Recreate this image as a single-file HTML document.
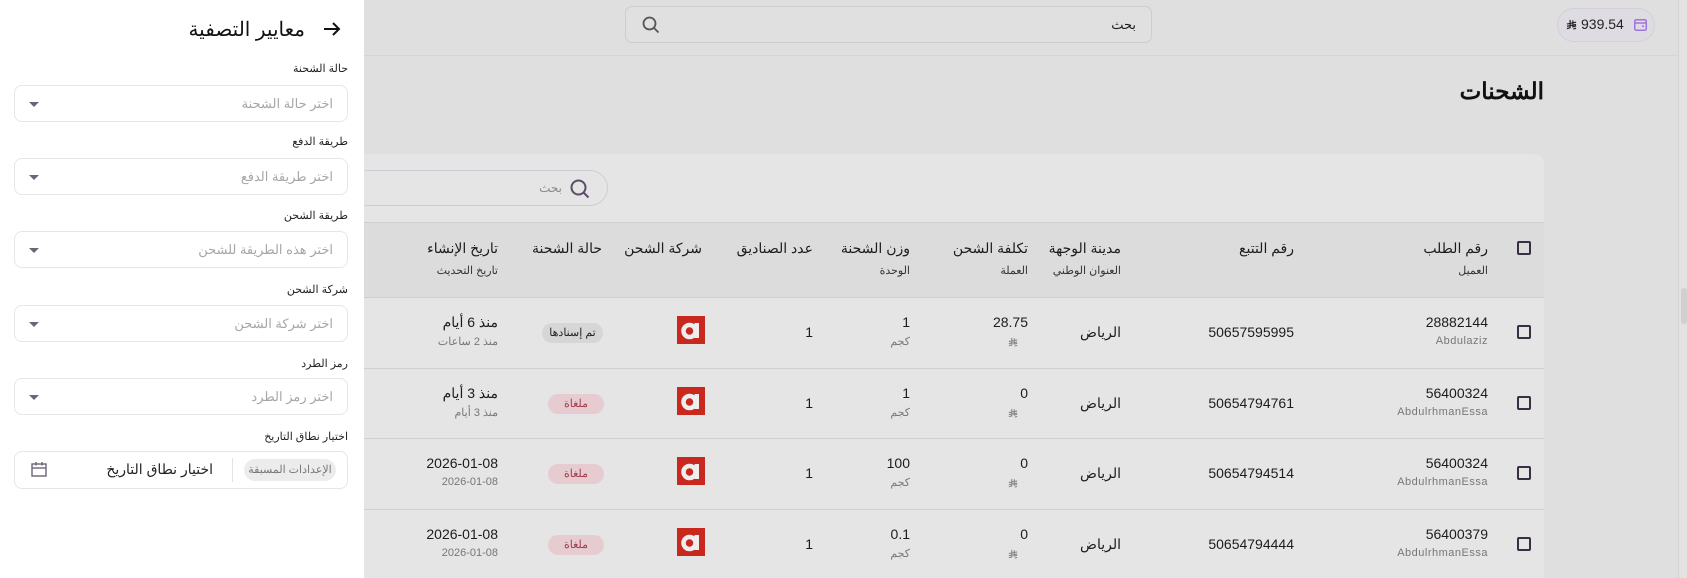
<!DOCTYPE html>
<html><head><meta charset="utf-8"><style>
*{box-sizing:border-box;margin:0;padding:0}
html,body{overflow:hidden}
body{width:1687px;height:578px;background:#dfdfdf;font-family:"Liberation Sans","Noto Sans CJK SC",sans-serif;color:#1c1c1c;position:relative}
.a{position:absolute}
.r{position:absolute;text-align:right;white-space:nowrap}
.hd{font-size:14px;color:#1c1c1c}
.sb{font-size:11px;color:#333}
.num{font-size:14px;color:#1c1c1c}
.gr{font-size:11px;color:#777}
.cb{position:absolute;width:14px;height:14px;border:2px solid #3a2e45;border-radius:2px}
.logo{position:absolute;width:28px;height:28px;background:#c9281f}
.bad{position:absolute;height:20px;border-radius:10px;font-size:11px;line-height:20px;text-align:center}
.hl{position:absolute;left:0;width:1544px;height:1px;background:#cfcfcf}
.lbl{position:absolute;right:calc(100% - 348px);font-size:11px;color:#222;white-space:nowrap}
.inp{position:absolute;left:14px;width:334px;height:37px;border:1px solid #e6e6e6;border-radius:8px;background:#fff}
.inp span{position:absolute;right:14px;top:10px;font-size:13px;color:#a6a6a6}
.inp i{position:absolute;left:14px;top:16px;width:0;height:0;border-left:5px solid transparent;border-right:5px solid transparent;border-top:5px solid #6d6478}
</style></head><body>
<svg width="0" height="0" style="position:absolute"><defs><symbol id="sar" viewBox="0 0 12 12"><path d="M4.5 1V9.5L1 10.5M7.5 1.5V8.5L11 7.5M1 5.5L11 3.5M1 8L11 6M8 11L11 10" fill="none" stroke="currentColor" stroke-width="1.3"/></symbol></defs></svg>
<div class="a" style="left:0;top:55px;width:1678px;height:1px;background:#d6d6d6"></div>
<div class="a" style="left:1678px;top:0;width:1px;height:578px;background:#d2d2d2"></div>
<div class="a" style="left:1679px;top:0;width:8px;height:578px;background:#e3e3e3"></div>
<div class="a" style="left:1681px;top:288px;width:6px;height:36px;background:#d0d0d0;border-radius:3px"></div>
<div class="a" style="left:625px;top:6px;width:527px;height:37px;border:1px solid #cdcdcd;border-radius:7px;background:#e0e0e0"></div>
<div class="r" style="right:calc(1687px - 1136px);top:17px;font-size:13px">بحث</div>
<svg class="a" style="left:642px;top:16px" width="18" height="18" viewBox="0 0 18 18"><circle cx="7.5" cy="7.5" r="6" fill="none" stroke="#555" stroke-width="1.8"/><line x1="12" y1="12" x2="16.5" y2="16.5" stroke="#555" stroke-width="1.8"/></svg>
<div class="a" style="left:1557px;top:8px;width:98px;height:34px;border:1px solid #d2cfd8;border-radius:17px;background:#dedbe3"></div>
<svg class="a" style="left:1566px;top:19px;color:#222" width="11" height="11"><use href="#sar"/></svg>
<div class="a" style="left:1581px;top:16px;font-size:14px;color:#222">939.54</div>
<svg class="a" style="left:1634px;top:19px" width="13" height="12" viewBox="0 0 13 12"><rect x="0.75" y="0.75" width="11.5" height="10.5" rx="1.5" fill="none" stroke="#a074e0" stroke-width="1.5"/><line x1="1" y1="4" x2="12" y2="4" stroke="#a074e0" stroke-width="1.5"/><rect x="8" y="6.5" width="2" height="1.5" fill="#a074e0"/></svg>
<div class="r" style="right:calc(1687px - 1544px);top:78px;font-size:23px;font-weight:bold;color:#111">الشحنات</div>
<div class="a" style="left:0;top:154px;width:1544px;height:424px;background:#e5e5e5;border-radius:0 10px 0 0">
 <div class="a" style="left:350px;top:16px;width:258px;height:36px;border:1px solid #cfcbd6;border-radius:18px"></div>
 <svg class="a" style="left:570px;top:25px" width="20" height="20" viewBox="0 0 20 20"><circle cx="8.5" cy="8.5" r="7" fill="none" stroke="#5a4d68" stroke-width="2"/><line x1="13.5" y1="13.5" x2="18.5" y2="18.5" stroke="#5a4d68" stroke-width="2"/></svg>
 <div class="r" style="right:calc(1544px - 562px);top:27px;font-size:12px;color:#8a8a8a">بحث</div>
 <div class="a" style="left:0;top:68px;width:1544px;height:75px;background:#dcdcdc"></div>
 <div class="hl" style="top:68px"></div><div class="hl" style="top:143px"></div>
 <div class="hl" style="top:214px"></div><div class="hl" style="top:284px"></div><div class="hl" style="top:355px"></div><div class="hl" style="top:425px"></div>
</div>
<div class="cb" style="left:1517px;top:241px"></div>
<div class="r hd" style="right:199px;top:240px">رقم الطلب</div><div class="r sb" style="right:199px;top:264px">العميل</div>
<div class="r hd" style="right:393px;top:240px">رقم التتبع</div>
<div class="r hd" style="right:566px;top:240px">مدينة الوجهة</div><div class="r sb" style="right:566px;top:264px">العنوان الوطني</div>
<div class="r hd" style="right:659px;top:240px">تكلفة الشحن</div><div class="r sb" style="right:659px;top:264px">العملة</div>
<div class="r hd" style="right:777px;top:240px">وزن الشحنة</div><div class="r sb" style="right:777px;top:264px">الوحدة</div>
<div class="r hd" style="right:874px;top:240px">عدد الصناديق</div>
<div class="r hd" style="right:985px;top:240px">شركة الشحن</div>
<div class="r hd" style="right:1085px;top:240px">حالة الشحنة</div>
<div class="r hd" style="right:1189px;top:240px">تاريخ الإنشاء</div><div class="r sb" style="right:1189px;top:264px">تاريخ التحديث</div>
<div id="rows"></div>
<script>
var rows=[["28882144","Abdulaziz","50657595995","28.75","1","تم إسنادها","منذ 6 أيام","منذ 2 ساعات"],
["56400324","AbdulrhmanEssa","50654794761","0","1","ملغاة","منذ 3 أيام","منذ 3 أيام"],
["56400324","AbdulrhmanEssa","50654794514","0","100","ملغاة","2026-01-08","2026-01-08"],
["56400379","AbdulrhmanEssa","50654794444","0","0.1","ملغاة","2026-01-08","2026-01-08"]];
var tops=[297,368,438,509],h="";
rows.forEach(function(r,i){var t=tops[i],m=t+35;
h+='<div class="cb" style="left:1517px;top:'+(m-7)+'px"></div>';
h+='<div class="r num" style="right:199px;top:'+(m-18)+'px">'+r[0]+'</div><div class="r gr" style="right:199px;top:'+(m+3)+'px;letter-spacing:.5px">'+r[1]+'</div>';
h+='<div class="r num" style="right:393px;top:'+(m-8)+'px">'+r[2]+'</div>';
h+='<div class="r num" style="right:566px;top:'+(m-8)+'px">الرياض</div>';
h+='<div class="r num" style="right:659px;top:'+(m-18)+'px">'+r[3]+'</div><svg class="a" style="left:1008px;top:'+(m+5)+'px;color:#888" width="10" height="10"><use href="#sar"/></svg>';
h+='<div class="r num" style="right:777px;top:'+(m-18)+'px">'+r[4]+'</div><div class="r gr" style="right:777px;top:'+(m+3)+'px">كجم</div>';
h+='<div class="r num" style="right:874px;top:'+(m-8)+'px">1</div>';
h+='<div class="logo" style="left:677px;top:'+(m-16)+'px"><svg width="28" height="28" viewBox="0 0 28 28"><circle cx="12.5" cy="15" r="6" fill="none" stroke="#eee" stroke-width="4.5"/><rect x="17.5" y="7" width="4.5" height="15" fill="#eee"/></svg></div>';
var b=i==0?'background:#d6d6d6;color:#222;width:61px;left:542px':'background:#e6ccd1;color:#a33a4a;width:56px;left:548px';
h+='<div class="bad" style="'+b+';top:'+(m-9)+'px">'+r[5]+'</div>';
h+='<div class="r num" style="right:1189px;top:'+(m-18)+'px">'+r[6]+'</div><div class="r gr" style="right:1189px;top:'+(m+3)+'px">'+r[7]+'</div>';});
document.getElementById('rows').innerHTML=h;
</script>
<div class="a" style="left:0;top:0;width:364px;height:578px;background:#fff">
 <div class="r" style="right:calc(364px - 305px);top:17px;font-size:20px;color:#111">معايير التصفية</div>
 <svg class="a" style="left:323px;top:21px" width="18" height="16" viewBox="0 0 18 16"><path d="M1 8H16M10 2L16 8L10 14" fill="none" stroke="#111" stroke-width="2"/></svg>
 <div class="lbl" style="top:62px">حالة الشحنة</div>
 <div class="inp" style="top:85px"><span>اختر حالة الشحنة</span><i></i></div>
 <div class="lbl" style="top:135px">طريقة الدفع</div>
 <div class="inp" style="top:158px"><span>اختر طريقة الدفع</span><i></i></div>
 <div class="lbl" style="top:209px">طريقة الشحن</div>
 <div class="inp" style="top:231px"><span>اختر هذه الطريقة للشحن</span><i></i></div>
 <div class="lbl" style="top:283px">شركة الشحن</div>
 <div class="inp" style="top:305px"><span>اختر شركة الشحن</span><i></i></div>
 <div class="lbl" style="top:357px">رمز الطرد</div>
 <div class="inp" style="top:378px"><span>اختر رمز الطرد</span><i></i></div>
 <div class="lbl" style="top:430px">اختيار نطاق التاريخ</div>
 <div class="a" style="left:14px;top:451px;width:334px;height:38px;border:1px solid #e6e6e6;border-radius:8px">
  <div class="a" style="left:229px;top:7px;width:92px;height:22px;border-radius:11px;background:#ececec;font-size:11px;color:#777;text-align:center;line-height:22px">الإعدادات المسبقة</div>
  <div class="a" style="left:217px;top:6px;width:1px;height:24px;background:#e3e3e3"></div>
  <div class="r" style="right:134px;top:9px;font-size:14px;color:#222">اختيار نطاق التاريخ</div>
  <svg class="a" style="left:16px;top:10px" width="16" height="15" viewBox="0 0 16 15"><rect x="1" y="2" width="14" height="12" fill="none" stroke="#6d6478" stroke-width="1.4"/><line x1="1" y1="6" x2="15" y2="6" stroke="#6d6478" stroke-width="1.4"/><line x1="5" y1="0" x2="5" y2="3.5" stroke="#6d6478" stroke-width="1.4"/><line x1="11" y1="0" x2="11" y2="3.5" stroke="#6d6478" stroke-width="1.4"/></svg>
 </div>
</div>
</body></html>
